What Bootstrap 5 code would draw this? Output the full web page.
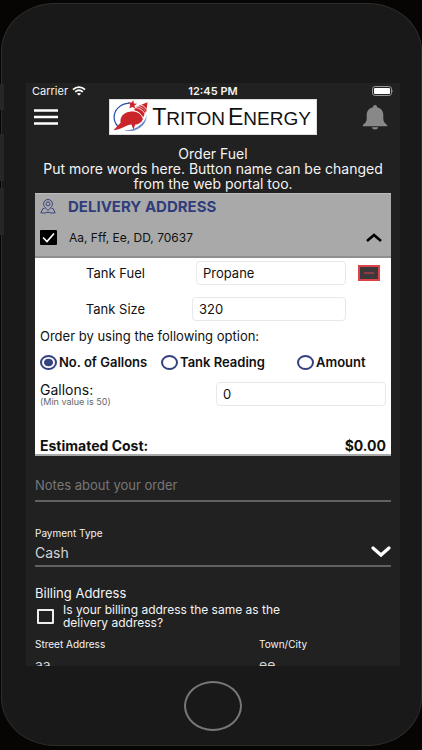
<!DOCTYPE html>
<html lang="en">
<head>
<meta charset="utf-8">
<meta name="viewport" content="width=device-width, initial-scale=1">
<title>Triton Energy – Order Fuel</title>
<link href="https://cdn.jsdelivr.net/npm/bootstrap@5.3.0/dist/css/bootstrap.min.css" rel="stylesheet">
<style>
body { background: #060503; color: #f4f4f4; font-family: Inter, "Liberation Sans", sans-serif; font-size: 13px; line-height: 15px; }
.device { background: #191919; border: 1px solid #2f2d2c; border-radius: 54px / 48px; margin: 3px 0 4px 1px; padding: 0 21px 0 24px; min-height: 0; }
.side-key { position: absolute; left: -2px; width: 4px; background: #262626; }
.key-a { top: 80px; height: 26px; }
.key-b { top: 130px; height: 47px; }
.key-c { top: 184px; height: 47px; }
.bezel-top, .bezel-bottom { height: 79px; }
.screen { background: #212121; min-height: 0; }
.status { height: 16px; font-size: 11px; padding: 0 6px; }
.status > * { flex: 1 1 0; }
.topbar { height: 36px; padding: 0 12px 0 8px; }
.menu { width: 30px; }
.brand { background: #fff; border: 1px solid #ddd; width: 208px; height: 36px; color: #111; font-family: "Liberation Sans", sans-serif; font-size: 19px; line-height: 36px; padding: 2px 2px 0 3px; text-decoration: none; }
.brand b { font-weight: 400; font-size: 23px; }
.brand-words { gap: 3px; }
.intro { font-size: 14px; padding-top: 11px; }
.order { background: #fff; color: #111; border-bottom: 2px solid #a6a8a9; margin: 2px 9px 0; }
.order-head { background: #a9a9a9; border-top: 1px solid #bbb; border-bottom: 2px solid #8f8f8f; height: 65px; padding: 0 5px; }
.heading { color: #303d7c; font-size: 15px; line-height: 25px; font-weight: 700; }
.addr { height: 37px; font-size: 12px; }
.tick { appearance: none; width: 17px; height: 15px; border-radius: 1px; flex: none; margin: 0; }
.tick:checked { background: #000 url("data:image/svg+xml,%3Csvg xmlns='http://www.w3.org/2000/svg' viewBox='0 0 17 15'%3E%3Cpath d='M3 7.5l4 4 7-8' fill='none' stroke='white' stroke-width='1.7'/%3E%3C/svg%3E") center/100% 100%; }
.tick-light { border: 2px solid #eee; }
.field { height: 24px; border: 1px solid #e8e8e8; border-radius: 4px; background: #fff; font-size: 13px; padding: 0 6px; color: #111; min-width: 0; }
.tanks { display: grid; row-gap: 12px; padding-top: 3px; }
.tank { display: grid; grid-template-columns: 157px minmax(0, 1fr) 45px; height: 24px; align-items: center; }
.tank label { text-align: center; padding-left: 4px; }
.remove { width: 22px; height: 16px; background: #3d393b; border: 2px solid #dc4348; justify-self: center; }
.pad { padding-left: 5px; padding-right: 5px; }
.ask { font-size: 13px; line-height: 15px; margin: 8px 0 3px; }
.choices { display: grid; grid-template-columns: 121px 136px minmax(0, 1fr); height: 30px; align-items: center; font-weight: 600; }
.choices label { gap: 2px; }
.choices input { appearance: none; width: 17px; height: 15px; border: 2px solid #35437f; border-radius: 50%; margin: 0; flex: none; }
.choices input:checked { background: radial-gradient(ellipse, #35437f 0 4px, #fff 5px); }
.quantity { display: grid; grid-template-columns: 176px minmax(0, 1fr); height: 38px; margin-top: 5px; }
.amount-name { font-size: 14px; }
.hint { font-size: 9px; line-height: 9px; color: #666; }
.total { font-size: 14px; font-weight: 700; height: 16px; margin-top: 18px; }
.lower { padding: 0 9px; }
.line-field { background: transparent; color: #d5d5d5; border: 0; border-bottom: 2px solid #606262; border-radius: 0; padding: 0; appearance: none; outline: 0; }
.notes { height: 32px; margin-top: 14px; font-size: 13px; }
.notes::placeholder { color: #777; opacity: 1; }
.caption { font-size: 10px; line-height: 14px; }
.payment { height: 27px; font-size: 14px; background: transparent url("data:image/svg+xml,%3Csvg xmlns='http://www.w3.org/2000/svg' viewBox='0 0 20 12'%3E%3Cpath d='M2 2l8 7 8-7' fill='none' stroke='white' stroke-width='3.2' stroke-linecap='round'/%3E%3C/svg%3E") right 6px/20px 12px no-repeat; }
.billing { font-size: 13px; line-height: 15px; font-weight: 400; margin: 19px 0 2px; }
.same { font-size: 12px; line-height: 13px; padding-left: 2px; gap: 9px; }
.locality { display: grid; grid-template-columns: 224px minmax(0, 1fr); margin-top: 8px; }
.locality input { height: 26px; font-size: 14px; border: 0; }
.home { width: 58px; height: 50px; border: 2px solid #777; border-radius: 50%; background: transparent; padding: 0; }
</style>
</head>
<body>
<div class="vh-100 d-flex flex-column overflow-hidden">
<div class="device position-relative flex-grow-1 d-flex flex-column">
  <span class="side-key key-a"></span><span class="side-key key-b"></span><span class="side-key key-c"></span>
  <div class="bezel-top flex-shrink-0"></div>
  <main class="screen flex-grow-1 overflow-hidden">
    <div class="status d-flex align-items-center">
      <span class="d-flex align-items-center gap-1">Carrier
        <svg width="14" height="10" viewBox="0 0 14 10" fill="none" stroke="#fff" stroke-width="1.8" aria-hidden="true"><path d="M1 3.6C4.4.3 9.6.3 13 3.6M3.2 5.9c2.3-2 5.3-2 7.6 0"/><path d="M7 9.6 4.9 7.7c1.2-1 3-1 4.2 0z" fill="#fff" stroke="none"/></svg>
      </span>
      <span class="text-center fw-semibold">12:45 PM</span>
      <span class="d-flex justify-content-end">
        <svg width="22" height="10" viewBox="0 0 22 10" aria-hidden="true"><rect x=".5" y=".5" width="19" height="9" rx="2.6" fill="none" stroke="#999"/><rect x="2" y="2" width="16" height="6" rx="1" fill="#fff"/><path d="M20.5 3.5q1.4 1.5 0 3z" fill="#999"/></svg>
      </span>
    </div>
    <header class="topbar d-flex align-items-center justify-content-between">
      <button class="btn menu p-0 border-0 d-flex" aria-label="Menu"><svg width="24" height="16" viewBox="0 0 24 16"><path d="M0 1.5h24M0 8h24M0 14.5h24" stroke="#fff" stroke-width="2.5"/></svg></button>
      <a href="#" class="brand d-flex align-items-center">
        <svg class="flex-shrink-0 mb-1" width="36" height="34" viewBox="0 0 38 35" aria-hidden="true">
          <path d="M17 4C8 4.500 1 11 1.200 19c.1 3.500 1.300 6.500 3.800 9" fill="none" stroke="#2b4da5" stroke-width="1.300"/>
          <path d="M35.500 16c.5 7-4 14-13 16.700-4 .9-8 .9-11 0 7 .2 13-1.900 18-6.500 4-3.700 5.800-6.200 6-10.200z" fill="#6f87c4"/>
          <path d="M16 2.500l3.200 1 2.300-2.500.5 3.200 3.500.4-2.900 1.900.8 3.200-2.900-1.800-3.300 1.500 1-3.400z" fill="#c9252b"/>
          <path d="M.5 32.500L8 24.500C7 17.500 12 13.500 18 13c2-.2 3-.4 5-.4 4 .4 8 4.600 8.500 8-1 4-5 5.500-8 6L21.500 32l-2-5.500c-4-.5-9.500 5-19 6z" fill="#c9252b"/>
          <path d="M22 11.500q6.500 1 9.500 8l3-6.500q-3-5.300-9.500-5.500z" fill="#c9252b"/>
          <path d="M26.500 7L36.500 3 35 13.500q-3-5.500-8.500-6.500z" fill="#c9252b"/>
          <path d="M20.500 12q8 .5 11.500 8M23.500 8.500q7 .8 10.500 7M28.500 5.500q4.500 1 7 5" fill="none" stroke="#fff" stroke-width=".9"/>
        </svg>
        <span class="brand-words flex-grow-1 d-flex justify-content-center text-nowrap"><span><b>T</b>RITON</span> <span><b>E</b>NERGY</span></span>
      </a>
      <button class="btn p-0 border-0 d-flex" aria-label="Notifications"><svg width="26" height="26" viewBox="0 0 26 26" fill="#888"><path d="M13 1a2 2 0 0 0-2 2.2C7 4 4.700 7 4.700 11v4C4.500 18 3 19 .8 21v1.300h24.400V21c-2.200-2-3.700-3-3.900-6v-4c0-4-2.300-7-6.300-7.800A2 2 0 0 0 13 1zM9.800 23.300h6.400c-.4 3-6 3-6.400 0z"/></svg></button>
    </header>
    <div class="intro text-center"><div>Order Fuel</div><div>Put more words here. Button name can be changed from the web portal too.</div></div>

    <section class="order">
      <div class="order-head">
        <h1 class="heading d-flex align-items-center m-0">
          <svg class="me-2" width="16" height="15" viewBox="0 0 16 15" fill="none" stroke="#35437f" aria-hidden="true"><path d="M8 11.500C5 8.500 3.500 6.800 3.500 4.800a4.500 4.300 0 0 1 9 0c0 2-1.500 3.700-4.500 6.700z"/><circle cx="8" cy="4.800" r="2"/><path d="M4.500 9.500H3L.8 13.800q3.500.9 7.200-.6 3.700 1.500 7.200.6L13 9.500h-1.500"/></svg>
          <span class="ms-1">DELIVERY ADDRESS</span>
        </h1>
        <div class="addr d-flex align-items-center">
          <input class="tick" type="checkbox" id="addr" checked>
          <label for="addr" class="flex-grow-1 ms-2 ps-1">Aa, Fff, Ee, DD, 70637</label>
          <button class="btn p-0 border-0 d-flex me-1" aria-label="Collapse"><svg width="16" height="9" viewBox="0 0 16 9"><path d="M1 8l7-6 7 6" fill="none" stroke="#000" stroke-width="2.500"/></svg></button>
        </div>
      </div>
      <div class="tanks">
        <div class="tank">
          <label for="fuel">Tank Fuel</label><input class="field ms-1" id="fuel" value="Propane">
          <button class="remove d-flex align-items-center justify-content-center p-0" aria-label="Remove tank"><svg width="10" height="2"><path d="M0 1h10" stroke="#dc4348"/></svg></button>
        </div>
        <div class="tank"><label for="size">Tank Size</label><input class="field" id="size" value="320"></div>
      </div>
      <fieldset>
        <legend class="pad ask">Order by using the following option:</legend>
        <div class="choices pad">
          <label class="d-flex align-items-center text-nowrap"><input type="radio" name="by" checked>No. of Gallons</label>
          <label class="d-flex align-items-center text-nowrap"><input type="radio" name="by">Tank Reading</label>
          <label class="d-flex align-items-center text-nowrap"><input type="radio" name="by">Amount</label>
        </div>
      </fieldset>
      <div class="quantity pad">
        <label for="gal"><span class="d-block amount-name">Gallons:</span><span class="d-block hint">(Min value is 50)</span></label>
        <input class="field" id="gal" value="0">
      </div>
      <div class="total pad d-flex justify-content-between"><span>Estimated Cost:</span><span>$0.00</span></div>
    </section>

    <form class="lower">
      <input class="line-field notes w-100 d-block" aria-label="Notes" placeholder="Notes about your order">
      <label for="pay" class="caption d-block mt-4">Payment Type</label>
      <select id="pay" class="line-field payment w-100 d-block"><option>Cash</option></select>
      <h2 class="billing">Billing Address</h2>
      <div class="same d-flex align-items-center">
        <input type="checkbox" id="same" class="tick tick-light">
        <label for="same">Is your billing address the same as the<br>delivery address?</label>
      </div>
      <div class="locality">
        <div><label for="street" class="caption d-block">Street Address</label><input id="street" class="line-field w-100" value="aa"></div>
        <div><label for="town" class="caption d-block">Town/City</label><input id="town" class="line-field w-100" value="ee"></div>
      </div>
    </form>
  </main>
  <div class="bezel-bottom flex-shrink-0 d-flex align-items-center justify-content-center"><button class="home" aria-label="Home"></button></div>
</div>
</div>
<script src="https://cdn.jsdelivr.net/npm/bootstrap@5.3.0/dist/js/bootstrap.bundle.min.js"></script>
</body>
</html>
